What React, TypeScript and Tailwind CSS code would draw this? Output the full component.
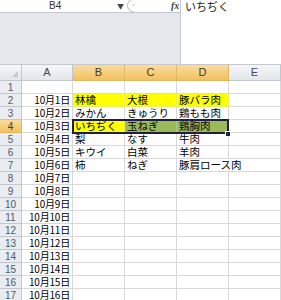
const cols = ['A', 'B', 'C', 'D', 'E'];

const data: Record<number, string[]> = {
  2: ['林檎', '大根', '豚バラ肉'],
  3: ['みかん', 'きゅうり', '鶏もも肉'],
  4: ['いちぢく', '玉ねぎ', '鶏胸肉'],
  5: ['梨', 'なす', '牛肉'],
  6: ['キウイ', '白菜', '羊肉'],
  7: ['柿', 'ねぎ', '豚肩ロース肉'],
};

const jp = { fontFamily: '"Noto Sans CJK JP", "Noto Sans", sans-serif' };

function fill(row: number, col: number) {
  if (row === 2 && col >= 1 && col <= 3) return 'bg-[#ffff00]';
  if (row === 4 && col === 1) return 'bg-[#ffff00]';
  if (row === 4 && (col === 2 || col === 3)) return 'bg-[#9bbb59]';
  return '';
}

export default function App() {
  const rows = Array.from({ length: 17 }, (_, i) => i + 1);
  return (
    <div className="w-[281px] h-[300px] overflow-hidden bg-white text-black" style={jp}>
      <div className="flex h-[65px] border-b border-[#c5c9cf]">
        <div className="w-[181px] flex flex-col bg-[#e4e7eb] border-r border-[#c5c9cf]">
          <div className="h-[13px] bg-white border-b border-[#c5c9cf] relative">
            <span className="absolute left-[49px] top-0 text-[10px] text-[#333] leading-[12px]" style={{ fontFamily: '"Liberation Sans", sans-serif' }}>B4</span>
            <span className="absolute left-[117px] top-0 text-[7px] text-[#444] leading-[12px]">▼</span>
            <svg className="absolute left-[126px] top-[-2px]" width="14" height="15" viewBox="0 0 14 15">
              <path d="M8 1 A6.5 6.5 0 0 0 8 14" fill="none" stroke="#b8bcc2" strokeWidth="1" />
              <path d="M6 7 h3" stroke="#c8ccd2" strokeWidth="1" />
            </svg>
            <span className="absolute left-[171px] top-0 text-[10px] italic font-bold text-[#444] leading-[11px]" style={{ fontFamily: '"Liberation Serif", serif' }}>fx</span>
          </div>
        </div>
        <div className="flex-1 bg-white pl-[4px] text-[11px] leading-[13px] text-[#222]">いちぢく</div>
      </div>

      <div className="relative grid grid-cols-[22px_51px_52px_52px_52px_52px] bg-white">
        <div className="h-[16px] bg-gradient-to-b from-[#f5f7f9] to-[#e3e6ea] border-r border-b border-[#c2c7ce] relative">
          <svg className="absolute right-[3px] bottom-[3px]" width="6" height="6" viewBox="0 0 6 6">
            <path d="M6 0 L6 6 L0 6 Z" fill="#c4c8ce" />
          </svg>
        </div>
        {cols.map((c, i) => {
          const sel = i >= 1 && i <= 3;
          return (
            <div
              key={c}
              className={`h-[16px] flex items-center justify-center text-[11px] border-r border-b ${
                sel
                  ? 'bg-gradient-to-b from-[#f9dc9e] to-[#f1c15f] border-[#e2b85a] text-[#4a3a1a]'
                  : 'bg-gradient-to-b from-[#f5f7f9] to-[#e3e6ea] border-[#c2c7ce] text-[#3e4a58]'
              }`}
              style={{ fontFamily: '"Liberation Sans", sans-serif' }}
            >
              {c}
            </div>
          );
        })}
        {rows.map((r) => {
          const selRow = r === 4;
          const vals = data[r] || [];
          return [
            <div
              key={`h${r}`}
              className={`h-[13px] flex items-center justify-center text-[10px] border-r border-b ${
                selRow
                  ? 'bg-gradient-to-b from-[#f9dc9e] to-[#f1c15f] border-[#e2b85a] text-[#4a3a1a]'
                  : 'bg-[#e9ecf0] border-[#c2c7ce] text-[#4e5b69]'
              }`}
              style={{ fontFamily: '"Liberation Sans", sans-serif' }}
            >
              {r}
            </div>,
            <div
              key={`a${r}`}
              className="h-[13px] border-r border-b border-[#d8d8d8] text-[10px] leading-[12px] text-right pr-[2px] whitespace-nowrap tracking-[-0.2px]"
            >
              {r >= 2 ? `10月${r - 1}日` : ''}
            </div>,
            ...[1, 2, 3, 4].map((ci) => (
              <div
                key={`c${r}-${ci}`}
                className={`h-[13px] border-b ${r === 7 && ci === 3 ? '' : 'border-r'} ${fill(r, ci)} ${
                  fill(r, ci) === '' ? 'border-[#d8d8d8]' : 'border-[#d8d8d8]/40'
                } text-[10.5px] leading-[12px] pl-[2px] whitespace-nowrap relative z-[1]`}
              >
                {vals[ci - 1] || ''}
              </div>
            )),
          ];
        })}
        <div className="absolute left-[72px] top-[54px] w-[157px] h-[15px] border-2 border-[#1f1f3f] z-[2] pointer-events-none" />
        <div className="absolute left-[225px] top-[66px] w-[6px] h-[6px] bg-[#1f1f3f] border border-white z-[3]" />
      </div>
    </div>
  );
}
